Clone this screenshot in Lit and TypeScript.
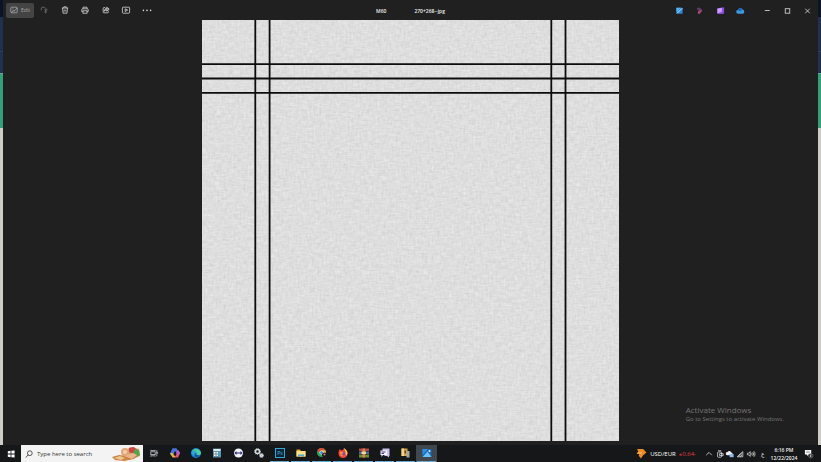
import { LitElement, html, css, svg } from "lit";
import { customElement } from "lit/decorators.js";

const icon = (body: unknown, size = 10, box = 20) =>
  html`<svg class="i" width=${size} height=${size} viewBox="0 0 ${box} ${box}" fill="none" stroke="currentColor" stroke-width="2" aria-hidden="true">${body}</svg>`;

const edit = svg`<rect x="2" y="3" width="16" height="14" rx="2"/><path d="M3 16l6-5 3 2M9 14l9-9M6 7h2"/>`;

const tools = [
  { label: "Rotate", dim: true, body: svg`<path d="M3 11V8a5 5 0 0 1 5-5h3l4 4v4M11 9l4 3 3-4"/><circle cx="14" cy="15" r="2"/>` },
  { label: "Delete", body: svg`<path d="M2 5h16M7 5V2h6v3M4 5l1 13h10l1-13M8 9v5M12 9v5"/>` },
  { label: "Print", body: svg`<path d="M5 7V3h10v4M5 14H2V9a2 2 0 0 1 2-2h12a2 2 0 0 1 2 2v5h-3"/><rect x="5" y="12" width="10" height="6"/>` },
  { label: "Share", body: svg`<path d="M8 4H5a2 2 0 0 0-2 2v9a2 2 0 0 0 2 2h9a2 2 0 0 0 2-2v-2"/><path d="M12 3l6 5-6 5v-3c-3 0-5 1-6 3 0-4 2-7 6-7z" fill="currentColor" fill-opacity=".5"/>` },
  { label: "Slideshow", body: svg`<rect x="1" y="3" width="18" height="15" rx="2"/><path d="M8 7l6 3-6 4z"/>` },
  { label: "See more", body: svg`<g fill="currentColor" stroke="none"><circle cx="1" cy="11" r="2"/><circle cx="10" cy="11" r="2"/><circle cx="19" cy="11" r="2"/></g>` },
];

const apps = [
  { label: "Photos", body: svg`<g stroke="none"><rect x="3" y="4" width="14" height="13" rx="1" fill="#2a87d8"/><path d="M3 4h10L3 14z" fill="#56b4ee"/><path d="M5 16L16 5" stroke="#d5efff" stroke-width="2"/></g>` },
  { label: "Designer", body: svg`<g stroke="none"><path d="M5 4h6l6 6-6 2-6-4z" fill="#743b72"/><path d="M7 11l9-1-5 7H6z" fill="#a54b69"/><path d="M5 5h5l2 4z" fill="#4d3a59"/></g>` },
  { label: "Clipchamp", body: svg`<g stroke="none"><path d="M3 5l15-2v13l-3 2H3z" fill="#8e4ce5"/><path d="M3 6l10-2v9l-10 3z" fill="#c9a0ff"/></g>` },
  { label: "OneDrive", body: svg`<g stroke="none"><path d="M5 17a4 4 0 0 1-1-8 6 6 0 0 1 11-1 5 5 0 0 1 1 9z" fill="#3a9ade"/><path d="M4 9a6 6 0 0 1 11-1L9 12z" fill="#1b69b8"/></g>` },
];

const controls = [
  { label: "Minimize", body: svg`<path d="M4 10h11"/>` },
  { label: "Maximize", body: svg`<rect x="5" y="6" width="10" height="10"/>` },
  { label: "Close", body: svg`<path d="M5 6l10 10M15 6L5 16"/>` },
];

const pinned = [
  { label: "Task View", body: svg`<g stroke="#c8c8c8"><rect x="2" y="7" width="11" height="7"/><path d="M2 4V2M13 4V2M2 17v2M13 17v2M2 4h11M2 17h11M17 3v4M17 13v5"/><path d="M16 8h3v3h-3z"/></g>` },
  { label: "Copilot", body: svg`<g stroke="none"><path d="M5 1h8l3 6H9l-3 8H2L0 12z" fill="#2b8fe0"/><path d="M5 1h8l2 4H9L6 10H1z" fill="#4b6de2"/><path d="M0 10h6l2 5 4 1-2 3H5z" fill="#e6b23f"/><path d="M14 5h3l3 5-4 9H9l3-4z" fill="#e4557c"/><path d="M12 9l2-4h3l3 5-2 4z" fill="#b45fd8"/></g>` },
  { label: "Microsoft Edge", body: svg`<g stroke="none"><circle cx="10" cy="10" r="10" fill="#1882d0"/><path d="M1 8a10 10 0 0 1 19 2c0 5-7 5-8 3 1-5-6-7-11-5z" fill="#4bcf9c"/><path d="M1 8c5-6 11-1 11 3-3-2-7 0-4 5-4-1-8-4-7-8z" fill="#2ba7dc"/><path d="M9 10c-2 3 1 6 8 5-2 3-7 4-9 1-1-2-1-5 1-6z" fill="#0d4d92"/></g>` },
  { label: "Calculator", body: svg`<g stroke="none"><rect x="2" y="1" width="16" height="18" fill="#668ca1"/><path d="M3 2h14v4H3z" fill="#d7edf6"/><path d="M4 8h3v3H4zM9 8h3v3H9zM4 13h3v3H4zM9 13h3v3H9z" fill="#fff"/><path d="M14 8h3v9h-3z" fill="#3da2cf"/></g>` },
  { label: "TeamViewer", body: svg`<g stroke="none"><circle cx="11" cy="10" r="9" fill="#f2f3ff"/><path d="M3 10l4-4v3h8V6l4 4-4 4v-3H7v3z" fill="#20236e"/></g>` },
  { label: "Services", body: svg`<g stroke="#d3dde2"><circle cx="7" cy="7" r="4" stroke-width="3"/><circle cx="7" cy="7" r="6" stroke-dasharray="2 2"/><circle cx="15" cy="15" r="2" stroke-width="3"/><circle cx="15" cy="15" r="4" stroke-dasharray="2 1"/></g>` },
  { label: "Photoshop", open: true, body: svg`<rect x="1" y="1" width="18" height="18" fill="#06283b" stroke="#37a5cf"/><text x="10" y="14" text-anchor="middle" font-family="Open Sans, sans-serif" font-size="10" stroke="none" fill="#46bce9">Ps</text>` },
  { label: "File Explorer", open: true, body: svg`<g stroke="none"><path d="M1 3h7l2 3h9v12H1z" fill="#e3a82f"/><path d="M1 6h18v10H1z" fill="#ffdf88"/><path d="M4 13h12v5h-3v-2H7v2H4z" fill="#4eaad9"/></g>` },
  { label: "Chrome", open: true, body: svg`<g stroke="none"><circle cx="9" cy="9" r="9" fill="#34a353"/><path d="M1 5a9 9 0 0 1 16 0H9l-4 5z" fill="#e54635"/><path d="M9 5h8a9 9 0 0 1-6 13l2-8z" fill="#f6c52f"/><circle cx="9" cy="9" r="4" fill="#fff"/><circle cx="9" cy="9" r="3" fill="#3f82e9"/><circle cx="15" cy="14" r="5" fill="#17191c"/><circle cx="15" cy="13" r="2" fill="#c78a6c"/></g>` },
  { label: "Firefox", open: true, body: svg`<g stroke="none"><path d="M2 5l2-3 2 3 4-1 2-4c4 3 7 6 7 11a9 9 0 0 1-18 0c0-2 0-4 1-6z" fill="#f04a35"/><path d="M12 0c4 3 7 6 7 11l-3 5-1-8z" fill="#ffca3d"/><circle cx="10" cy="11" r="4" fill="#8341c4"/><path d="M3 8l6-1 2 3-4 2 4 3-5 1z" fill="#ff9032"/></g>` },
  { label: "WinRAR", open: true, body: svg`<g stroke="none"><path d="M0 1h20v5H0z" fill="#b5474b"/><path d="M0 7h20v5H0z" fill="#4a63a0"/><path d="M0 13h20v6H0z" fill="#6d8a3d"/><path d="M7 1h5v18H7z" fill="#d08a3a"/><path d="M5 7h9v5H5z" fill="#f1d593"/></g>` },
  { label: "Messages", open: true, body: svg`<g stroke="none"><path d="M5 1h14v15h-1v3l-4-3H9V6H5z" fill="#c9c1ee"/><path d="M1 5h13v9H6l-3 4v-4H1z" fill="#f5f1ff"/><path d="M3 8h8M3 11h5" stroke="#4c397e"/></g>` },
  { label: "Archive", open: true, body: svg`<g stroke="none"><path d="M1 1h12v15H1z" fill="#d8a83e"/><path d="M1 1h5v15H1z" fill="#f3d586"/><path d="M11 6h6v13h-6z" fill="#a5a7a8"/><path d="M7 5h3v6H7z" fill="#5c4a2b"/></g>` },
  { label: "Photos", open: true, active: true, body: svg`<g stroke="none"><path d="M1 2h18v16H1z" fill="#1b66bd"/><path d="M1 18L11 7l8 11z" fill="#65c4fa"/><path d="M1 2h11L1 14z" fill="#2f8ee0"/><circle cx="15" cy="6" r="2" fill="#d9f3ff"/></g>` },
];

const tray = [
  { label: "Show hidden icons", body: svg`<path d="M3 13l7-7 7 7"/>` },
  { label: "Safely remove hardware", body: svg`<rect x="4" y="5" width="10" height="13" rx="2"/><path d="M5 2h8M9 9h9v5H9z"/>` },
  { label: "OneDrive", body: svg`<g stroke="none"><path d="M3 13a4 4 0 0 1 1-8 5 5 0 0 1 9 1 4 4 0 0 1 2 7z" fill="#eee"/><rect x="9" y="10" width="10" height="8" fill="#8dbdea"/></g>` },
  { label: "Network", body: svg`<path d="M3 17L17 4v13zM7 17a8 8 0 0 1 8-8M11 17a4 4 0 0 1 4-4"/>` },
  { label: "Volume", body: svg`<path d="M1 8h3l4-4v12l-4-4H1zM11 7c2 2 2 4 0 6M14 5c3 3 3 7 0 10M17 3c4 4 4 10 0 14"/>` },
];

@customElement("app-root")
export class AppRoot extends LitElement {
  static styles = css`
    :host { display: flex; flex-direction: column; height: 100vh; font-family: "Open Sans", "Noto Sans", sans-serif; color: #ddd; background: #171717; overflow: hidden; }
    * { box-sizing: border-box; }
    button { border: 0; padding: 0; margin: 0; background: none; color: inherit; font: inherit; display: flex; align-items: center; justify-content: center; min-width: 0; }
    .i { display: block; flex: none; overflow: visible; }
    .desktop { flex: 1; min-height: 0; display: flex; padding: 0 3px; background: linear-gradient(#0b1426 0 17px, #203150 17px 51px, #2b3f60 51px 52px, #203150 52px 73px, #6ba58f 73px 74px, #32a078 74px 128px, #cdccc7 128px); }
    .window { flex: 1; min-width: 0; display: flex; flex-direction: column; background: #202020; }
    .bar { height: 20px; flex: none; display: grid; grid-template-columns: 1fr auto 1fr; align-items: center; }
    .left, .right { display: flex; align-items: center; }
    .left { padding-left: 3px; }
    .right { justify-content: flex-end; gap: 6px; }
    .edit { width: 28px; height: 15px; border-radius: 2px; background: #444; gap: 3px; font-size: 5px; color: #aaa; }
    .tools { display: flex; width: 123px; color: #d8d8d8; }
    .apps { display: flex; width: 82px; }
    .controls { display: flex; width: 61px; color: #ccc; }
    .tools button, .apps button, .controls button { flex: 1; height: 20px; }
    .tools .dim { color: #777; }
    .title { margin: 0; padding-top: 1px; display: flex; gap: 28px; font-size: 5px; line-height: 8px; font-weight: 600; color: #eee; }
    .viewer { flex: 1; min-height: 0; display: flex; justify-content: center; padding-bottom: 4px; position: relative; }
    .photo { height: 100%; max-width: 100%; display: block; }
    .notice { position: absolute; right: 34px; bottom: 21px; color: #747474; font-size: 6px; line-height: 9px; }
    .notice p { margin: 0; }
    .notice .lead { font-size: 8px; line-height: 11px; }
    .taskbar { height: 17px; flex: none; display: flex; align-items: stretch; background: #151719; }
    .start, .pin { width: 21px; }
    .search { width: 122px; display: flex; align-items: center; gap: 4px; padding: 0 2px 0 4px; background: #f3f3f3; color: #333; }
    .search input { flex: 1; min-width: 0; border: 0; padding: 0; background: none; font: 6px/12px "Open Sans", sans-serif; outline: none; }
    .search input::placeholder { color: #333; opacity: 1; }
    .pins { display: flex; }
    .pin { border-bottom: 1px solid transparent; }
    .open { border-image: linear-gradient(90deg, transparent 10%, #6ba9d2 10% 90%, transparent 90%) 1; }
    .active { background: #40474d; }
    .tray { margin-left: auto; display: flex; align-items: center; }
    .rate { gap: 3px; font-size: 6px; margin-right: 8px; color: #fff; }
    .fall { color: #e03a44; }
    .status { display: flex; width: 52px; }
    .status button { flex: 1; }
    .lang { width: 14px; font-size: 6px; }
    .clock { width: 28px; flex-direction: column; font-size: 5px; font-weight: 600; line-height: 8px; color: #eee; white-space: nowrap; }
    .notes { width: 20px; margin-right: 3px; }
  `;

  private photo() {
    return html`<svg class="photo" viewBox="0 0 417 421" role="img" aria-label="Grey woven fabric with black stripes">
      <defs>
        <filter id="weave" x="0" y="0" width="100%" height="100%" color-interpolation-filters="sRGB">
          <feTurbulence type="fractalNoise" baseFrequency=".5 .18" numOctaves="2" seed="4" result="a"/>
          <feColorMatrix in="a" values=".14 .08 0 0 .76 .14 .08 0 0 .76 .14 .08 0 0 .76 0 0 0 0 1" result="v"/>
          <feTurbulence type="fractalNoise" baseFrequency=".15 .6" numOctaves="2" seed="9" result="b"/>
          <feColorMatrix in="b" values=".14 .08 0 0 .76 .14 .08 0 0 .76 .14 .08 0 0 .76 0 0 0 0 1" result="h"/>
          <feComposite in="v" in2="h" operator="arithmetic" k2=".5" k3=".5"/>
        </filter>
      </defs>
      <rect width="417" height="421" fill="#dcdcdc"/>
      <rect width="417" height="421" filter="url(#weave)"/>
      <path d="M53.3 0v421M67.6 0v421M349.3 0v421M363.5 0v421M0 44.2h417M0 58.5h417M0 72.8h417" fill="none" stroke="#0c0c0c" stroke-width="1.8"/>
    </svg>`;
  }

  render() {
    return html`
      <main class="desktop">
        <section class="window">
          <header class="bar">
            <div class="left">
              <button class="edit">${icon(edit, 8)}<span>Edit</span></button>
              <div class="tools">${tools.map((t) => html`<button class=${t.dim ? "dim" : ""} aria-label=${t.label}>${icon(t.body, 8)}</button>`)}</div>
            </div>
            <h1 class="title"><span>M60</span><span>270+268--jpg</span></h1>
            <div class="right">
              <div class="apps">${apps.map((a) => html`<button aria-label=${a.label}>${icon(a.body, 9)}</button>`)}</div>
              <div class="controls">${controls.map((c) => html`<button aria-label=${c.label}>${icon(c.body, 9)}</button>`)}</div>
            </div>
          </header>
          <div class="viewer">
            ${this.photo()}
            <div class="notice"><p class="lead">Activate Windows</p><p>Go to Settings to activate Windows.</p></div>
          </div>
        </section>
      </main>
      <footer class="taskbar">
        <button class="start" aria-label="Start">${icon(svg`<path d="M2 3l7-1v7H2zM11 2l8-1v8h-8zM2 11h7v7l-7-1zM11 11h8v8l-8-1z" fill="#fff" stroke="none"/>`, 8)}</button>
        <label class="search">
          ${icon(svg`<circle cx="12" cy="8" r="6"/><path d="M8 12l-6 7"/>`, 8)}
          <input type="text" placeholder="Type here to search" aria-label="Search" />
          <svg class="i" width="30" height="16" viewBox="0 0 30 16" aria-hidden="true">
            <path d="M13 5l7-4 8 2 1 7-7 3-9-2z" fill="#d79b67"/>
            <path d="M18 2l5-1 3 3-3 4-5-2z" fill="#cf4547"/><path d="M24 3l4 1 1 5-4 2-3-4z" fill="#58a447"/>
            <circle cx="14" cy="6" r="4" fill="#e1a676"/><circle cx="14" cy="6" r="2" fill="#f2cda8"/>
            <path d="M1 11l7-2 8 1 10-1-3 4-10 2-9-1z" fill="#c98447"/>
            <path d="M3 12l6-2 5 2-4 2z" fill="#f0c58d"/><path d="M13 10l9-3 4 2-5 4z" fill="#edb58b"/>
          </svg>
        </label>
        <nav class="pins" aria-label="Taskbar">
          ${pinned.map((p) => html`<button class="pin ${p.open ? "open" : ""} ${p.active ? "active" : ""}" aria-label=${p.label}>${icon(p.body, p.label === "Task View" ? 8 : 10)}</button>`)}
        </nav>
        <div class="tray">
          <button class="rate">${icon(svg`<path d="M2 2h11l6 6-6 5-4 6-4-5 1-3H1l3-4z" fill="#ed8b22" stroke="none"/><path d="M3 9h8" stroke="#ffc16b"/>`, 11)}<span>USD/EUR</span><span class="fall">±0,64-</span></button>
          <div class="status">${tray.map((t) => html`<button aria-label=${t.label}>${icon(t.body, 8)}</button>`)}</div>
          <button class="lang" lang="ar" aria-label="Input language">ع</button>
          <button class="clock"><span>6:16 PM</span><span>12/22/2024</span></button>
          <button class="notes" aria-label="Notifications">${icon(svg`<path d="M2 2h14v10h-6l-3 4v-4H2z" fill="#fff" stroke="none"/><path d="M4 5h9M4 8h9" stroke="#555" stroke-width="1"/><circle cx="15" cy="15" r="5" fill="#292929" stroke="#999" stroke-width="1"/><path d="M15 12v6" stroke="#eee"/>`, 9)}</button>
        </div>
      </footer>
    `;
  }
}
